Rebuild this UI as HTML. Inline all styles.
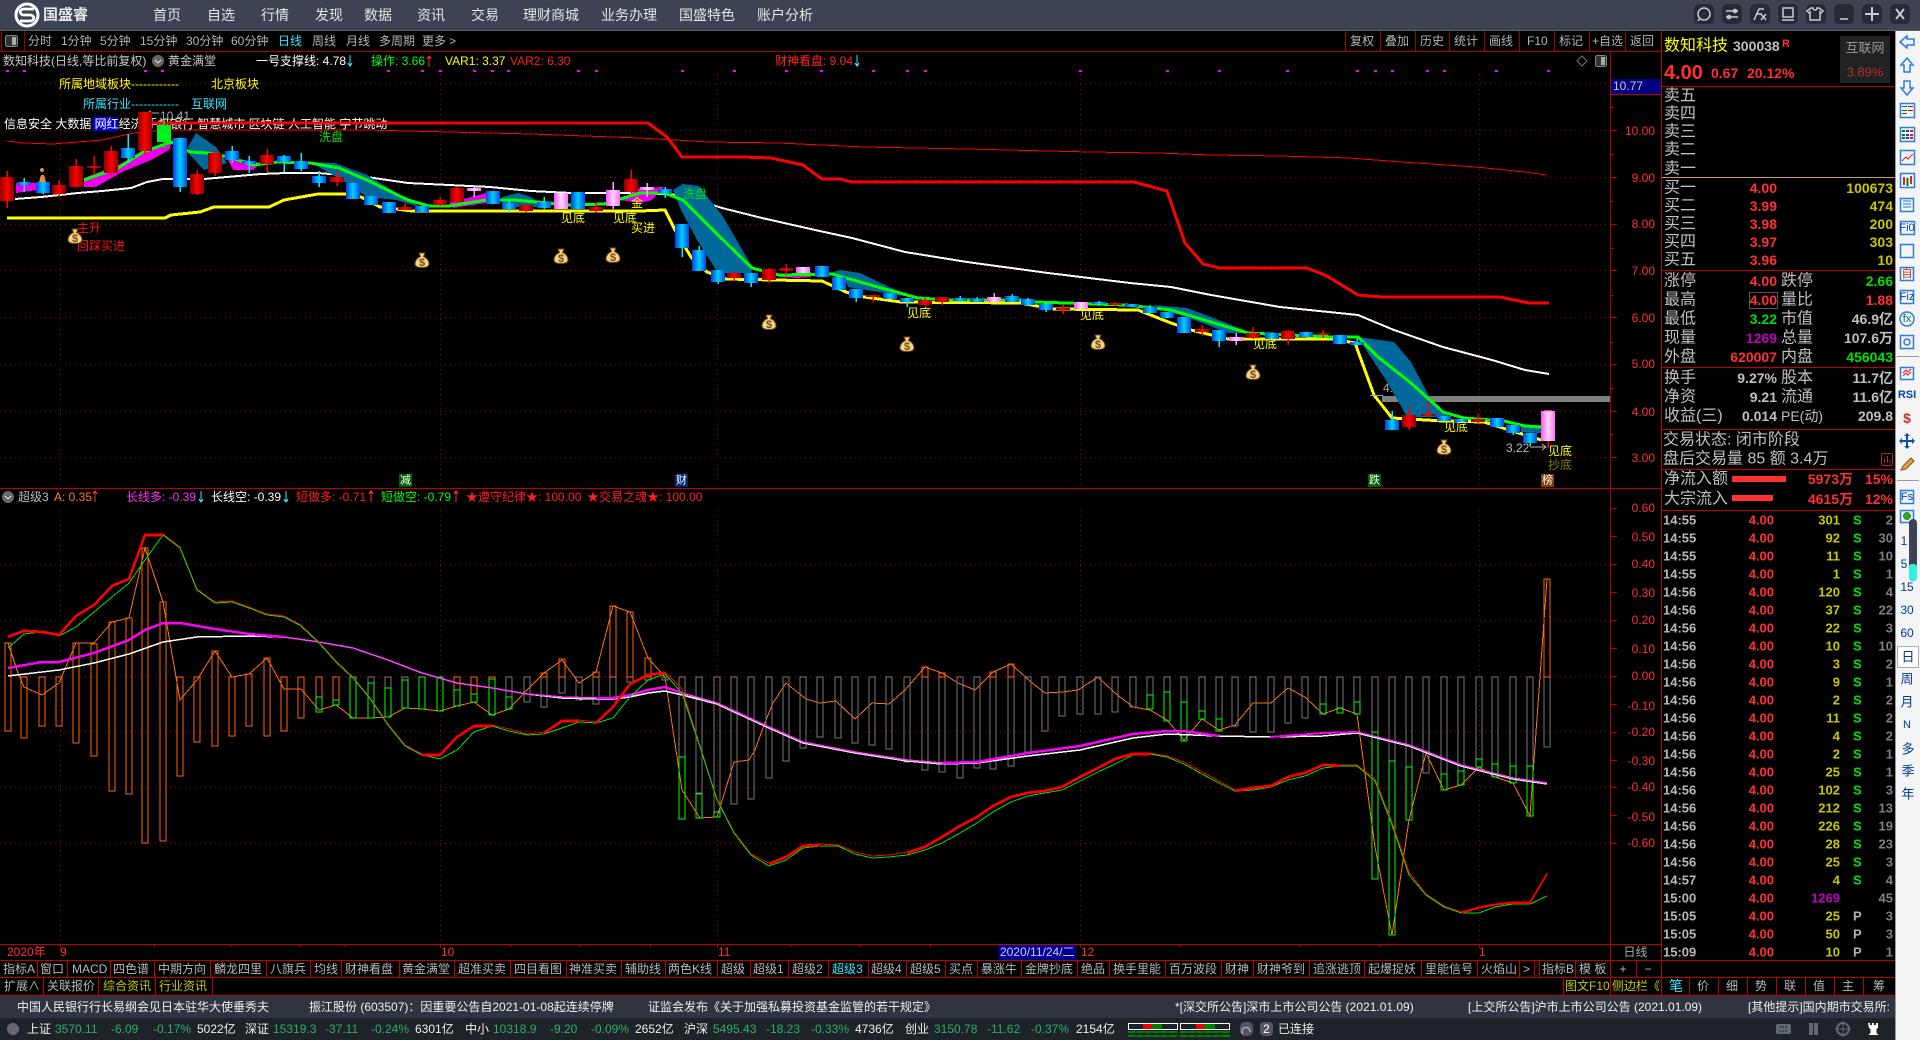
<!DOCTYPE html>
<html><head><meta charset="utf-8"><title>数知科技</title>
<style>
html,body{margin:0;padding:0;background:#000;overflow:hidden}
svg{display:block}
text{font-family:"Liberation Sans","WenQuanYi Zen Hei","Noto Sans CJK SC",sans-serif;font-size:12px;dominant-baseline:central;white-space:pre}
.s11{font-size:11px}.s13{font-size:13px}.s14{font-size:14px}.s16{font-size:16px}.b{font-weight:bold}
.e{text-anchor:end}.m{text-anchor:middle}
.n text{font-weight:bold}
.c rect{width:14px}
.h rect{width:6px;fill:none}
.dot{stroke:#a00000;stroke-dasharray:1 4;fill:none}
.ln{fill:none}
</style></head><body>
<svg xmlns="http://www.w3.org/2000/svg" width="1920" height="1040" viewBox="0 0 1920 1040" shape-rendering="crispEdges">
<defs>
<linearGradient id="gr" x1="0" x2="1" y1="0" y2="0"><stop offset="0" stop-color="#8c0000"/><stop offset=".5" stop-color="#ff0000"/><stop offset="1" stop-color="#8c0000"/></linearGradient>
<linearGradient id="gb" x1="0" x2="1" y1="0" y2="0"><stop offset="0" stop-color="#0040e8"/><stop offset=".5" stop-color="#00d0ff"/><stop offset="1" stop-color="#0048e8"/></linearGradient>
<linearGradient id="gp" x1="0" x2="1" y1="0" y2="0"><stop offset="0" stop-color="#ff50ff"/><stop offset=".5" stop-color="#ffd8ff"/><stop offset="1" stop-color="#ff70ff"/></linearGradient>
<g id="bag" shape-rendering="auto"><path d="M-3 -7 L3 -7 L1.5 -3.5 C5 -2 7 1 7 3.500 C7 6.500 4 7.500 0 7.500 C-4 7.500 -7 6.500 -7 3.500 C-7 1 -5 -2 -1.500 -3.500Z" fill="#f3d68c" stroke="#7a4a10" stroke-width="1"/></g>
</defs>
<rect width="1920" height="1040" fill="#000"/>

<!-- title bar -->
<rect width="1920" height="30" fill="#3e4353"/>
<rect y="30" width="1920" height="1" fill="#5a5f6d"/>
<g shape-rendering="auto"><circle cx="27" cy="15" r="11" fill="none" stroke="#fff" stroke-width="3"/><path d="M34 9H24C19 9 19 15 24 15H30C35 15 35 21 30 21H20" fill="none" stroke="#fff" stroke-width="2.800"/></g>
<text x="43" y="15" class="b" fill="#e8e8e8" style="font-size:15px">国盛睿</text>
<g class="s14" fill="#e6e6e6">
<text x="153" y="15" class="s14">首页</text><text x="207" y="15" class="s14">自选</text><text x="261" y="15" class="s14">行情</text><text x="315" y="15" class="s14">发现</text><text x="364" y="15" class="s14">数据</text><text x="417" y="15" class="s14">资讯</text><text x="471" y="15" class="s14">交易</text><text x="523" y="15" class="s14">理财商城</text><text x="601" y="15" class="s14">业务办理</text><text x="679" y="15" class="s14">国盛特色</text><text x="757" y="15" class="s14">账户分析</text>
</g>
<g fill="#272b36" shape-rendering="auto"><rect x="1694" y="4" width="20" height="20" rx="5"/><rect x="1722" y="4" width="20" height="20" rx="5"/><rect x="1750" y="4" width="20" height="20" rx="5"/><rect x="1778" y="4" width="20" height="20" rx="5"/><rect x="1806" y="4" width="20" height="20" rx="5"/><rect x="1834" y="4" width="20" height="20" rx="5"/><rect x="1862" y="4" width="20" height="20" rx="5"/><rect x="1890" y="4" width="20" height="20" rx="5"/></g>
<g fill="none" stroke="#c8ccd4" stroke-width="1.500" shape-rendering="auto">
<circle cx="1704" cy="14" r="6"/><path d="M1701 14h.01M1704 14h.01M1707 14h.01M1700 18l-2 3"/>
<path d="M1726 11h12M1726 17h12"/><circle cx="1735" cy="11" r="1.500"/><circle cx="1729" cy="17" r="1.500"/>
<path d="M1754 20L1759 9H1764M1756 14h6M1761 14l5 6M1766 14l-5 6"/>
<rect x="1783" y="8" width="10" height="9"/><path d="M1782 20h12"/>
<path d="M1812 8l-4 3 2 2 1-1v8h10v-8l1 1 2-2-4-3h-2a2 2 0 0 1-4 0z" transform="translate(-1 0)"/>
<path d="M1840 19h8"/>
<path d="M1872 7v14M1865 14h14" stroke-width="2"/>
<path d="M1896 9l8 10M1904 9l-8 10" stroke-width="2"/>
</g>

<!-- toolbar -->
<rect x="1" y="31" width="1" height="20" fill="#a00000"/><rect x="24" y="31" width="1" height="20" fill="#a00000"/>
<rect x="5.500" y="35.500" width="12" height="11" rx="2" fill="#333" stroke="#888"/><rect x="12" y="37" width="4" height="8" fill="#aaa"/>
<g fill="#b4b4b4">
<text x="28" y="41">分时</text><text x="61" y="41">1分钟</text><text x="100" y="41">5分钟</text><text x="140" y="41">15分钟</text><text x="186" y="41">30分钟</text><text x="231" y="41">60分钟</text><text x="278" y="41" fill="#30e8ff">日线</text><text x="312" y="41">周线</text><text x="346" y="41">月线</text><text x="379" y="41">多周期</text><text x="422" y="41">更多</text><text x="449" y="41">&gt;</text>
<text x="1350" y="41">复权</text><text x="1385" y="41">叠加</text><text x="1420" y="41">历史</text><text x="1454" y="41">统计</text><text x="1489" y="41">画线</text><text x="1527" y="41">F10</text><text x="1559" y="41">标记</text><text x="1592" y="41">+自选</text><text x="1630" y="41">返回</text>
</g>
<path d="M1345.500 31V51M1380.500 31V51M1415.500 31V51M1449.500 31V51M1484.500 31V51M1519.500 31V51M1554.500 31V51M1589.500 31V51M1625.500 31V51" stroke="#a00000"/>
<rect y="51" width="1661" height="1" fill="#b00000"/>

<!-- grid main -->
<path class="dot" d="M0 83.500H1610M0 130.500H1610M0 177.500H1610M0 224.500H1610M0 270.500H1610M0 317.500H1610M0 364.500H1610M0 411.500H1610M0 457.500H1610"/>
<path class="dot" d="M60.500 74V488M440.500 74V488M717.500 74V488M1080.500 74V488M1479.500 74V488M60.500 510V944M440.500 510V944M717.500 510V944M1080.500 510V944M1479.500 510V944"/>
<path class="dot" d="M0 564.500H1610M0 620.500H1610M0 676.500H1610M0 731.500H1610M0 787.500H1610M0 843.500H1610"/>

<!-- info row -->
<text x="3" y="61" fill="#c8c8c8">数知科技(日线,等比前复权)</text>
<circle cx="158" cy="61" r="6" fill="#666"/><path d="M155 60l3 3 3-3" stroke="#ddd" fill="none"/>
<text x="168" y="61" fill="#c8c8c8">黄金满堂</text>
<text x="256" y="61" fill="#fff">一号支撑线: 4.78</text><path d="M350 55v10M348 63l2 3 2-3" stroke="#30e8ff" fill="none"/>
<text x="371" y="61" fill="#00ff00">操作: 3.66</text><path d="M429 57v10M427 59l2-3 2 3" stroke="#ff3030" fill="none"/>
<text x="445" y="61" fill="#ffff00">VAR1: 3.37</text><text x="510" y="61" fill="#ff2020">VAR2: 6.30</text>
<text x="775" y="61" fill="#ff2020">财神看盘: 9.04</text><path d="M857 55v10M855 63l2 3 2-3" stroke="#30e8ff" fill="none"/>
<path d="M1582 56l5 5-5 5-5-5z" fill="none" stroke="#777" shape-rendering="auto"/><rect x="1595.500" y="55.500" width="11" height="11" rx="2" fill="#333" stroke="#888"/><rect x="1601" y="57" width="4" height="8" fill="#aaa"/>
<g fill="#ff00ff"><path d="M6 70h3v2h-3zM23 70h3v2h-3zM144 70h3v2h-3zM161 70h3v2h-3zM387 70h3v2h-3zM421 70h3v2h-3zM439 70h3v2h-3zM473 70h3v2h-3zM491 70h3v2h-3zM507 70h3v2h-3zM577 70h3v2h-3zM595 70h3v2h-3zM681 70h3v2h-3zM733 70h3v2h-3zM785 70h3v2h-3zM820 70h3v2h-3zM872 70h3v2h-3zM906 70h3v2h-3zM924 70h3v2h-3zM1079 70h3v2h-3zM1166 70h3v2h-3zM1218 70h3v2h-3zM1286 70h3v2h-3zM1356 70h3v2h-3zM1374 70h3v2h-3zM1391 70h3v2h-3zM1426 70h3v2h-3zM1443 70h3v2h-3zM1495 70h3v2h-3zM1547 70h3v2h-3z"/></g>

<!-- texts behind chart -->
<text x="59" y="84" fill="#ffff00">所属地域板块------------</text><text x="211" y="84" fill="#ffff00">北京板块</text>
<text x="83" y="104" fill="#30e8ff">所属行业------------</text><text x="191" y="104" fill="#30e8ff">互联网</text>
<rect x="93" y="117" width="25" height="14" fill="#0000d0"/>
<text x="4" y="124" fill="#fff">信息安全 大数据 网红经济 手机银行 智慧城市 区块链 人工智能 字节跳动</text>
<text x="160" y="116" fill="#aaa">10.41</text><path d="M147 113l4-2M147 113l4 2M147 113h12" stroke="#aaa" shape-rendering="auto" fill="none"/>
<text x="1383" y="388" fill="#aaa">4.18</text>

<!-- gray bar -->
<rect x="1382" y="396" width="228" height="6" fill="#808080"/>

<!-- red lines -->
<polyline class="ln" stroke="#ff0000" stroke-width="1" points="7,141 24,143 53,144 102,140 139,132 171,130 367,130 449,132 531,134 640,138 709,142 779,143 864,147 967,149 1089,152 1158,153 1211,155 1280,156 1349,158 1402,162 1476,167 1525,172 1547,175"/>
<polyline class="ln" stroke="#ff0000" stroke-width="3" points="151,123 648,123 667,137 682,157 742,157 771,158 803,165 822,179 840,179 852,182 1134,182 1167,191 1185,243 1203,264 1220,268 1307,268 1325,275 1358,295 1382,297 1500,297 1529,303 1549,303"/>
<polyline class="ln" stroke="#fff" stroke-width="2" points="15,199 41,197 78,193 102,191 131,188 147,182 163,179 204,179 261,174 286,173 318,173 367,177 408,183 490,187 531,191 571,193 640,193 681,195 722,208 762,218 815,230 852,238 905,252 967,262 1048,273 1130,283 1171,287 1211,295 1280,307 1358,315 1394,330 1443,347 1492,360 1525,370 1549,374"/>

<!-- teal -->
<g fill="#00699a">
<polygon points="188,147 196,133 216,147 227,163 204,170 190,155"/>
<polygon points="310,162 335,163 367,175 408,200 420,207 396,200 367,197 345,182"/>
<polygon points="502,197 518,193 531,197 547,207 502,207"/>
<polygon points="673,190 683,184 699,186 722,215 750,263 752,273 718,273 697,240 681,210"/>
<polygon points="830,273 840,270 860,273 889,287 918,298 885,293 848,287 844,277"/>
<polygon points="1154,305 1187,308 1211,317 1244,330 1252,333 1228,333 1187,317 1162,310"/>
<polygon points="1358,337 1394,342 1411,362 1431,400 1443,412 1451,417 1407,417 1386,380 1368,353"/>
<polygon points="1521,425 1541,425 1541,433 1521,432"/>
</g>
<!-- magenta -->
<g fill="#ee00ee">
<polygon points="84,178 118,165 143,152 173,140 169,150 151,160 122,172 96,187 84,187"/>
<polygon points="16,183 37,183 37,190 16,193"/>
<polygon points="227,158 245,160 261,163 253,170 233,170"/>
<polygon points="449,203 486,193 486,203 453,208"/>
<polygon points="620,200 640,188 664,187 652,200 640,203"/>
<polygon points="779,275 811,272 811,277 797,278 779,277"/>
</g>
<!-- yellow -->
<polyline class="ln" stroke="#ffff00" stroke-width="3" points="7,218 165,218 171,215 200,212 214,207 269,207 284,200 318,194 347,194 361,197 380,207 412,211 640,211 665,210 675,230 691,257 707,272 726,279 822,281 846,292 864,297 901,302 1020,303 1054,309 1138,310 1171,323 1191,330 1228,339 1333,339 1355,343 1374,395 1392,418 1443,421 1484,422 1541,440"/>
<!-- green -->
<polyline class="ln" stroke="#00ff00" stroke-width="3" points="84,180 118,168 143,152 171,142 190,152 208,153 229,157 253,165 278,162 310,163 339,168 367,180 408,200 429,206 449,206 486,200 514,200 571,205 604,204 640,193 664,193 683,200 718,235 752,268 779,275 832,274 885,289 918,298 950,300 1020,300 1036,302 1126,305 1171,310 1211,322 1248,333 1333,337 1358,337 1378,357 1411,383 1443,412 1464,418 1504,421 1525,426 1541,427"/>

<!-- wicks -->
<path fill="none" stroke="#ff0000" stroke-width="1.500" d="M7 171V208M59 180V197M76 159V187M94 156V175M111 146V175M145 112V155M197 170V195M215 150V176M267 149V172M337 171V186M405 203V210M440 197V206M457 187V203M526 205V212M596 202V213M631 170V193M734 272V281M769 268V283M786 264V275M873 295V302M925 298V306M942 297V305M1063 304V314M1115 302V306M1202 325V336M1253 327V339M1288 330V345M1323 330V338M1409 407V430M1428 402V417M1478 414V423M1548 441V448"/>
<path fill="none" stroke="#10e8ff" stroke-width="1.500" d="M24 178V192M43 177V194M128 134V163M180 138V192M232 146V163M249 156V173M284 155V172M301 153V171M319 171V187M509 200V213M544 197V209M665 187V198M682 224V257M699 246V271M718 270V284M751 273V287M856 289V302M907 298V307M960 296V302M977 297V302M1012 294V302M1028 298V306M1046 302V312M1099 301V306M1150 305V314M1219 330V347M1357 338V346M1392 411V430M1513 425V435M1530 433V446"/>
<path fill="none" stroke="#ffa0ff" stroke-width="1.500" d="M474 185V197M613 182V209M647 183V197M1236 333V345M994 293V302"/>
<path d="M164 120V148" stroke="#00e000" stroke-width="1.500"/>
<!-- candles -->
<g class="c" fill="url(#gr)">
<rect x="0" y="177" height="24"/><rect x="52" y="185" height="9"/><rect x="69" y="166" height="21"/><rect x="87" y="166" height="2"/><rect x="104" y="151" height="22"/><rect x="138" y="112" height="39"/><rect x="190" y="174" height="20"/><rect x="208" y="153" height="20"/><rect x="260" y="155" height="9"/><rect x="330" y="177" height="5"/><rect x="398" y="207" height="3"/><rect x="433" y="200" height="5"/><rect x="450" y="188" height="14"/><rect x="519" y="205" height="6"/><rect x="589" y="207" height="4"/><rect x="624" y="179" height="13"/><rect x="727" y="273" height="5"/><rect x="762" y="269" height="11"/><rect x="779" y="268" height="3"/><rect x="866" y="295" height="2"/><rect x="918" y="300" height="5"/><rect x="935" y="297" height="5"/><rect x="1056" y="308" height="2"/><rect x="1108" y="303" height="2"/><rect x="1195" y="329" height="3"/><rect x="1246" y="333" height="5"/><rect x="1281" y="331" height="8"/><rect x="1316" y="333" height="2"/><rect x="1402" y="415" height="12"/><rect x="1421" y="414" height="2"/><rect x="1471" y="419" height="3"/>
</g>
<g class="c" fill="url(#gb)">
<rect x="17" y="182" height="3"/><rect x="36" y="182" height="11"/><rect x="121" y="148" height="10"/><rect x="173" y="138" height="49"/><rect x="225" y="151" height="9"/><rect x="242" y="161" height="3"/><rect x="277" y="156" height="6"/><rect x="294" y="161" height="8"/><rect x="312" y="176" height="7"/><rect x="346" y="183" height="16"/><rect x="364" y="196" height="9"/><rect x="382" y="202" height="11"/><rect x="415" y="206" height="6"/><rect x="486" y="191" height="13"/><rect x="502" y="203" height="6"/><rect x="537" y="202" height="6"/><rect x="571" y="192" height="17"/><rect x="658" y="189" height="4"/><rect x="675" y="224" height="24"/><rect x="692" y="250" height="21"/><rect x="711" y="270" height="12"/><rect x="744" y="273" height="10"/><rect x="815" y="266" height="11"/><rect x="832" y="277" height="13"/><rect x="849" y="289" height="9"/><rect x="883" y="293" height="6"/><rect x="900" y="298" height="4"/><rect x="953" y="298" height="3"/><rect x="970" y="299" height="3"/><rect x="1005" y="296" height="6"/><rect x="1021" y="299" height="6"/><rect x="1039" y="304" height="6"/><rect x="1092" y="302" height="2"/><rect x="1125" y="304" height="3"/><rect x="1143" y="307" height="6"/><rect x="1160" y="312" height="6"/><rect x="1177" y="317" height="16"/><rect x="1212" y="330" height="11"/><rect x="1265" y="333" height="6"/><rect x="1299" y="332" height="5"/><rect x="1333" y="335" height="9"/><rect x="1350" y="342" height="3"/><rect x="1385" y="420" height="10"/><rect x="1437" y="416" height="5"/><rect x="1454" y="419" height="4"/><rect x="1490" y="418" height="9"/><rect x="1506" y="425" height="8"/><rect x="1523" y="433" height="10"/>
</g>
<g class="c" fill="url(#gp)">
<rect x="467" y="188" height="3"/><rect x="554" y="193" height="16"/><rect x="606" y="190" height="16"/><rect x="640" y="187" height="3"/><rect x="796" y="267" height="6"/><rect x="987" y="297" height="5"/><rect x="1074" y="302" height="7"/><rect x="1229" y="337" height="4"/><rect x="1541" y="411" height="30"/>
</g>
<rect x="157" y="125" width="14" height="17" fill="#00f020"/>
<rect x="1370" y="395" width="13" height="1" fill="#7f9fdf"/>
<rect x="1544" y="410" width="8" height="1" fill="#ff3030"/>

<!-- chart labels -->
<g fill="#ffff00">
<text x="561" y="218">见底</text><text x="613" y="218">见底</text><text x="631" y="203">金</text><text x="631" y="228">买进</text><text x="907" y="313">见底</text><text x="1080" y="315">见底</text><text x="1253" y="344">见底</text><text x="1444" y="427">见底</text><text x="1548" y="451">见底</text></g>
<text x="1548" y="465" fill="#808000">抄底</text>
<text x="319" y="137" fill="#00e000">洗盘</text><text x="683" y="194" fill="#00e000">洗盘</text>
<text x="77" y="228" fill="#ff1010">主升</text><text x="77" y="246" fill="#ff1010">回踩买进</text>
<text x="1506" y="448" fill="#bbb">3.22</text><path d="M1530 447h16M1542 444l4 3-4 3" stroke="#bbb" fill="none" shape-rendering="auto"/>
<path d="M42 172a2 2 0 1 1 .01 0M39 182l2-7h3l2 7z" fill="#e09030"/>
<g>
<use href="#bag" x="75" y="236"/><text x="75" y="239" class="m s11 b" fill="#7a4a10">$</text>
<use href="#bag" x="422" y="260"/><text x="422" y="263" class="m s11 b" fill="#7a4a10">$</text>
<use href="#bag" x="561" y="256"/><text x="561" y="259" class="m s11 b" fill="#7a4a10">$</text>
<use href="#bag" x="613" y="255"/><text x="613" y="258" class="m s11 b" fill="#7a4a10">$</text>
<use href="#bag" x="769" y="322"/><text x="769" y="325" class="m s11 b" fill="#7a4a10">$</text>
<use href="#bag" x="907" y="344"/><text x="907" y="347" class="m s11 b" fill="#7a4a10">$</text>
<use href="#bag" x="1098" y="342"/><text x="1098" y="345" class="m s11 b" fill="#7a4a10">$</text>
<use href="#bag" x="1253" y="372"/><text x="1253" y="375" class="m s11 b" fill="#7a4a10">$</text>
<use href="#bag" x="1444" y="447"/><text x="1444" y="450" class="m s11 b" fill="#7a4a10">$</text>
</g>
<rect x="399" y="474" width="13" height="13" fill="#006000"/><text x="405.500" y="480.500" class="m s11" fill="#fff">减</text>
<rect x="675" y="474" width="13" height="13" fill="#002a70"/><text x="681.500" y="480.500" class="m s11" fill="#fff">财</text>
<rect x="1368" y="474" width="13" height="13" fill="#006000"/><text x="1374.500" y="480.500" class="m s11" fill="#fff">跌</text>
<rect x="1541" y="474" width="13" height="13" fill="#804000"/><text x="1547.500" y="480.500" class="m s11" fill="#fff">榜</text>

<!-- dividers -->
<rect y="488" width="1661" height="1" fill="#c00000"/>
<rect x="1610" y="51" width="1" height="909" fill="#a80000"/>

<!-- sub header -->
<circle cx="8" cy="497" r="6" fill="#666"/><path d="M5 496l3 3 3-3" stroke="#ddd" fill="none"/>
<text x="18" y="497" fill="#bbb">超级3</text><text x="54" y="497" fill="#ff7f20">A: 0.35</text><path d="M95 492v10M93 494l2-3 2 3" stroke="#ff3030" fill="none"/>
<text x="126" y="497" fill="#ff30ff">长线多: -0.39</text><path d="M201 491v10M199 499l2 3 2-3" stroke="#30e8ff" fill="none"/>
<text x="211" y="497" fill="#fff">长线空: -0.39</text><path d="M286 491v10M284 499l2 3 2-3" stroke="#30e8ff" fill="none"/>
<text x="296" y="497" fill="#ff2020">短做多: -0.71</text><path d="M371 492v10M369 494l2-3 2 3" stroke="#ff3030" fill="none"/>
<text x="381" y="497" fill="#00ff00">短做空: -0.79</text><path d="M456 492v10M454 494l2-3 2 3" stroke="#ff3030" fill="none"/>
<text x="466" y="497" fill="#ff2020">★遵守纪律★: 100.00</text><text x="587" y="497" fill="#ff2020">★交易之魂★: 100.00</text>

<!-- thin orange line -->
<polyline class="ln" stroke="#ff7010" points="8,643 18,673 24,687 42,695 59,683 76,643 94,643 112,622 129,618 145,548 163,602 180,700 197,680 215,651 232,677 249,674 267,658 284,689 301,689 319,710 336,705 353,718 371,718 388,717 405,708 422,709 440,711 457,706 474,702 492,715 509,709 527,690 544,673 562,660 579,683 596,672 613,606 630,612 648,658 665,677 682,790 700,818 717,817 734,762 749,760 755,750 766,720 773,703 786,683 806,699 820,703 836,701 855,719 872,703 889,704 905,690 925,667 942,673 958,683 975,690 993,672 1011,664 1031,682 1045,693 1062,692 1078,690 1098,677 1115,693 1133,707 1150,710 1167,720 1184,740 1202,719 1219,730 1235,725 1253,703 1271,703 1288,688 1305,697 1323,714 1340,708 1357,714 1375,847 1392,935 1409,820 1426,753 1444,790 1461,785 1479,767 1495,777 1513,783 1530,816 1547,579"/>

<!-- histogram -->
<g class="h" stroke="#777">
<rect x="368" y="677" height="6"/><rect x="385" y="677" height="11"/><rect x="402" y="677" height="3"/><rect x="506" y="677" height="20"/><rect x="524" y="677" height="25"/><rect x="541" y="677" height="30"/><rect x="559" y="677" height="16"/><rect x="576" y="677" height="23"/><rect x="593" y="677" height="27"/><rect x="610" y="677" height="21"/><rect x="627" y="677" height="5"/><rect x="645" y="677" height="3"/><rect x="662" y="677" height="3"/><rect x="679" y="677" height="80"/><rect x="696" y="677" height="116"/><rect x="714" y="677" height="135"/><rect x="731" y="677" height="127"/><rect x="748" y="677" height="122"/><rect x="766" y="677" height="101"/><rect x="783" y="677" height="84"/><rect x="800" y="677" height="71"/><rect x="817" y="677" height="60"/><rect x="835" y="677" height="61"/><rect x="852" y="677" height="66"/><rect x="869" y="677" height="68"/><rect x="886" y="677" height="72"/><rect x="904" y="677" height="85"/><rect x="922" y="677" height="93"/><rect x="939" y="677" height="95"/><rect x="957" y="677" height="101"/><rect x="974" y="677" height="91"/><rect x="990" y="677" height="92"/><rect x="1008" y="677" height="89"/><rect x="1025" y="677" height="75"/><rect x="1042" y="677" height="54"/><rect x="1059" y="677" height="39"/><rect x="1077" y="677" height="37"/><rect x="1095" y="677" height="37"/><rect x="1112" y="677" height="35"/><rect x="1130" y="677" height="30"/><rect x="1147" y="677" height="18"/><rect x="1164" y="677" height="15"/><rect x="1181" y="677" height="25"/><rect x="1199" y="677" height="34"/><rect x="1216" y="677" height="42"/><rect x="1232" y="677" height="49"/><rect x="1250" y="677" height="55"/><rect x="1268" y="677" height="55"/><rect x="1285" y="677" height="46"/><rect x="1302" y="677" height="41"/><rect x="1320" y="677" height="27"/><rect x="1337" y="677" height="31"/><rect x="1354" y="677" height="25"/><rect x="1372" y="677" height="55"/><rect x="1389" y="677" height="84"/><rect x="1406" y="677" height="90"/><rect x="1423" y="677" height="96"/><rect x="1441" y="677" height="97"/><rect x="1458" y="677" height="94"/><rect x="1476" y="677" height="82"/><rect x="1492" y="677" height="87"/><rect x="1510" y="677" height="89"/><rect x="1527" y="677" height="89"/><rect x="1544" y="677" height="70"/>
</g>
<g class="h" stroke="#ff6600">
<rect x="5" y="643" height="88"/><rect x="21" y="677" height="61"/><rect x="39" y="677" height="49"/><rect x="56" y="677" height="49"/><rect x="73" y="643" height="100"/><rect x="91" y="644" height="112"/><rect x="109" y="622" height="169"/><rect x="126" y="618" height="176"/><rect x="142" y="548" height="295"/><rect x="160" y="602" height="239"/><rect x="177" y="677" height="99"/><rect x="194" y="677" height="65"/><rect x="212" y="651" height="95"/><rect x="229" y="677" height="59"/><rect x="246" y="674" height="52"/><rect x="264" y="658" height="78"/><rect x="281" y="677" height="54"/><rect x="298" y="677" height="41"/><rect x="316" y="677" height="20"/><rect x="333" y="677" height="23"/><rect x="454" y="677" height="13"/><rect x="471" y="677" height="17"/><rect x="489" y="677" height="2"/><rect x="541" y="673" height="4"/><rect x="559" y="659" height="18"/><rect x="593" y="672" height="5"/><rect x="610" y="606" height="71"/><rect x="627" y="612" height="65"/><rect x="645" y="658" height="19"/><rect x="922" y="667" height="10"/><rect x="939" y="673" height="4"/><rect x="990" y="672" height="5"/><rect x="1008" y="664" height="13"/><rect x="1544" y="579" height="98"/>
</g>
<g class="h" stroke="#00ff00">
<rect x="316" y="697" height="15"/><rect x="333" y="700" height="5"/><rect x="350" y="677" height="41"/><rect x="368" y="683" height="35"/><rect x="385" y="688" height="29"/><rect x="402" y="680" height="28"/><rect x="419" y="677" height="32"/><rect x="437" y="677" height="34"/><rect x="454" y="690" height="16"/><rect x="471" y="694" height="8"/><rect x="489" y="679" height="36"/><rect x="506" y="697" height="12"/><rect x="679" y="757" height="62"/><rect x="696" y="794" height="24"/><rect x="714" y="812" height="5"/><rect x="1147" y="695" height="14"/><rect x="1164" y="692" height="29"/><rect x="1181" y="702" height="39"/><rect x="1199" y="711" height="8"/><rect x="1216" y="719" height="12"/><rect x="1320" y="704" height="10"/><rect x="1337" y="708" height="5"/><rect x="1354" y="702" height="12"/><rect x="1372" y="732" height="147"/><rect x="1389" y="761" height="174"/><rect x="1406" y="767" height="53"/><rect x="1441" y="774" height="16"/><rect x="1458" y="771" height="14"/><rect x="1476" y="759" height="8"/><rect x="1492" y="764" height="13"/><rect x="1510" y="766" height="17"/><rect x="1527" y="766" height="50"/>
</g>

<!-- sub lines -->
<polyline class="ln" stroke="#fff" stroke-width="1.500" points="8,676 59,670 94,663 129,654 163,642 197,637 249,636 284,637 319,642 353,648 388,660 422,673 457,683 492,688 527,694 562,698 596,699 613,699 630,697 648,693 665,691 682,695 717,704 769,728 803,743 855,753 907,761 942,764 977,763 1028,756 1080,750 1133,738 1167,734 1219,736 1270,737 1323,736 1357,733 1409,746 1461,766 1513,779 1547,784"/>
<polyline class="ln" stroke="#ff00ff" stroke-width="2.500" points="8,668 42,662 59,662 94,653 129,640 145,630 163,623 180,623 215,629 249,634 284,637"/>
<polyline class="ln" stroke="#ff40ff" stroke-width="1.500" points="284,637 319,642 353,648 388,660 422,673 457,683 492,688 527,694 562,697 596,698"/>
<polyline class="ln" stroke="#ff00ff" stroke-width="2.500" points="596,698 613,698 630,695 648,690 665,687 682,693"/>
<polyline class="ln" stroke="#ff40ff" stroke-width="1.500" points="682,693 717,703 769,727 803,742 855,752 907,760 942,763"/>
<polyline class="ln" stroke="#ff00ff" stroke-width="2.500" points="942,763 977,762 1028,753 1080,746 1133,734 1167,731 1184,731 1219,736"/>
<polyline class="ln" stroke="#ff00ff" stroke-width="2" points="1270,737 1323,733 1357,732"/>
<polyline class="ln" stroke="#ff40ff" stroke-width="1.500" points="1357,732 1409,745 1461,765 1513,778 1547,783"/>
<!-- short-term red under green -->
<polyline class="ln" stroke="#ff0000" transform="translate(0 -1)" points="8,637 24,631 42,632 59,635 76,616 94,605 112,586 129,579 145,535 163,535 180,548 197,590 215,603 232,602 249,608 267,615 284,617 301,626 319,643 336,662 353,678 371,700 388,725 405,746 422,755 440,755 457,737 474,726 492,726 509,730 527,735 544,733 562,721 579,721 596,723 613,707 630,684 648,675 665,673 682,690 700,747 717,800 734,833 751,855 769,864 786,857 803,846 820,845 838,846 855,853 872,857 889,856 907,853 925,847 942,837 960,826 977,817 993,806 1011,797 1028,793 1045,791 1062,787 1080,777 1098,768 1115,759 1133,754 1150,754 1167,757 1184,763 1202,773 1219,782 1235,791 1253,788 1271,786 1288,777 1305,773 1323,765 1340,766 1357,766 1375,780 1392,823 1409,873 1426,895 1444,907 1461,913 1479,908 1495,905 1513,903 1530,903 1547,874"/>
<polyline class="ln" stroke="#00e000" points="8,648 24,634 42,632 59,636 76,627 94,612 112,597 129,583 145,560 163,535 180,548 197,590 215,603 232,602 249,608 267,615 284,617 301,626 319,643 336,662 353,678 371,700 388,725 405,746 422,755 440,759 457,750 474,732 492,726 509,731 527,735 544,734 562,728 579,722 596,723 613,718 630,697 648,680 665,674 682,693 700,747 717,800 734,833 751,855 769,866 786,860 803,848 820,846 838,846 855,854 872,858 889,857 907,855 925,850 942,843 960,833 977,823 993,812 1011,802 1028,796 1045,793 1062,790 1080,781 1098,772 1115,764 1133,755 1150,754 1167,757 1184,764 1202,774 1219,783 1235,791 1253,790 1271,787 1288,780 1305,776 1323,768 1340,766 1357,766 1375,781 1392,825 1409,875 1426,895 1444,907 1461,913 1479,913 1495,907 1513,904 1530,904 1547,896"/>
<polyline class="ln" stroke="#ff0000" stroke-width="2.500" points="8,637 24,631 42,632 59,635 76,616 94,605 112,586 129,579 145,535 163,535"/>
<polyline class="ln" stroke="#ff0000" stroke-width="2.500" points="422,755 440,755 457,737 474,726 492,726"/>
<polyline class="ln" stroke="#ff0000" stroke-width="2.500" points="544,733 562,721 579,721"/>
<polyline class="ln" stroke="#ff0000" stroke-width="2.500" points="596,723 613,707 630,684 648,675 665,673"/>
<polyline class="ln" stroke="#ff0000" stroke-width="2.500" points="769,864 786,857 803,846 820,845"/>
<polyline class="ln" stroke="#ff0000" stroke-width="2.500" points="907,853 925,847 942,837 960,826 977,817 993,806 1011,797 1028,793 1045,791 1062,787 1080,777 1098,768 1115,759 1133,754 1150,754"/>
<polyline class="ln" stroke="#ff0000" stroke-width="2.500" points="1235,791 1253,788 1271,786 1288,777 1305,773 1323,765 1340,766"/>
<polyline class="ln" stroke="#ff0000" stroke-width="1.500" points="1461,913 1479,908 1495,905 1513,903 1530,903 1547,874"/>

<!-- axis -->
<path d="M1611 107.500h3M1611 154.500h3M1611 201.500h3M1611 248.500h3M1611 295.500h3M1611 342.500h3M1611 388.500h3M1611 434.500h3M1611 130.500h6M1611 177.500h6M1611 224.500h6M1611 270.500h6M1611 317.500h6M1611 364.500h6M1611 411.500h6M1611 457.500h6M1611 508.500h6M1611 536.500h6M1611 564.500h6M1611 592.500h6M1611 620.500h6M1611 648.500h6M1611 676.500h6M1611 704.500h6M1611 732.500h6M1611 760.500h6M1611 787.500h6M1611 815.500h6M1611 843.500h6" stroke="#c00000"/>
<rect x="1611" y="79" width="50" height="15" fill="#000080"/><rect x="1611" y="94" width="50" height="1" fill="#c00000"/>
<text x="1613" y="86" fill="#c8c8c8">10.77</text>
<g class="e" fill="#ff3030">
<text class="e" x="1655" y="131">10.00</text><text class="e" x="1655" y="178">9.00</text><text class="e" x="1655" y="224">8.00</text><text class="e" x="1655" y="271">7.00</text><text class="e" x="1655" y="318">6.00</text><text class="e" x="1655" y="364">5.00</text><text class="e" x="1655" y="412">4.00</text><text class="e" x="1655" y="458">3.00</text>
<text class="e" x="1655" y="508">0.60</text><text class="e" x="1655" y="537">0.50</text><text class="e" x="1655" y="564">0.40</text><text class="e" x="1655" y="593">0.30</text><text class="e" x="1655" y="620">0.20</text><text class="e" x="1655" y="649">0.10</text><text class="e" x="1655" y="676">0.00</text><text class="e" x="1655" y="706">-0.10</text><text class="e" x="1655" y="732">-0.20</text><text class="e" x="1655" y="761">-0.30</text><text class="e" x="1655" y="787">-0.40</text><text class="e" x="1655" y="817">-0.50</text><text class="e" x="1655" y="843">-0.60</text>
</g>

<!-- date row -->
<rect y="944" width="1661" height="1" fill="#c00000"/><rect y="960" width="1895" height="1" fill="#c00000"/>
<path d="M60.500 945v2M154.500 945v2M230.500 945v2M300.500 945v2M345.500 945v2M440.500 945v3M510.500 945v2M580.500 945v2M650.500 945v2M717.500 945v3M790.500 945v2M860.500 945v2M930.500 945v2M1080.500 945v3M1180.500 945v2M1300.500 945v2M1379.500 945v2M1479.500 945v3" stroke="#c00000"/>
<text x="7" y="952" fill="#ff3030">2020年</text><text x="60" y="952" fill="#ff3030">9</text><text x="441" y="952" fill="#ff3030">10</text><text x="718" y="952" fill="#ff3030">11</text>
<rect x="998" y="945" width="78" height="15" fill="#000090"/><text x="1000" y="952" fill="#c8c8ff">2020/11/24/二</text>
<text x="1081" y="952" fill="#ff3030">12</text><text x="1479" y="952" fill="#ff3030">1</text>
<text x="1635.500" y="952" class="m" fill="#aaa">日线</text>

<!-- tabs -->
<rect y="977" width="1895" height="1" fill="#c00000"/><rect y="995" width="1895" height="1" fill="#c00000"/>
<path d="M37.500 961v16M67.500 961v16M110.500 961v16M154.500 961v16M210.500 961v16M266.500 961v16M310.500 961v16M341.500 961v16M399.500 961v16M454.500 961v16M510.500 961v16M566.500 961v16M621.500 961v16M665.500 961v16M717.500 961v16M750.500 961v16M788.500 961v16M828.500 961v16M868.500 961v16M906.500 961v16M945.500 961v16M977.500 961v16M1021.500 961v16M1077.500 961v16M1109.500 961v16M1165.500 961v16M1221.500 961v16M1253.500 961v16M1309.500 961v16M1364.500 961v16M1421.500 961v16M1477.500 961v16M1519.500 961v16M1534.500 961v16M1539.500 961v16M1575.500 961v16M1610.500 961v34M1636.500 961v16M1661.500 961v34M43.500 978v17M98.500 978v17M155.500 978v17M212.500 978v17M1563.500 978v17M1689.500 978v17M1718.500 978v17M1747.500 978v17M1776.500 978v17M1805.500 978v17M1834.500 978v17M1863.500 978v17" stroke="#c00000"/>
<g fill="#b8b8b8">
<text x="3" y="969">指标A</text><text x="40" y="969">窗口</text><text x="72" y="969">MACD</text><text x="113" y="969">四色谱</text><text x="158" y="969">中期方向</text><text x="214" y="969">麟龙四里</text><text x="270" y="969">八旗兵</text><text x="314" y="969">均线</text><text x="345" y="969">财神看盘</text><text x="402" y="969">黄金满堂</text><text x="458" y="969">超准买卖</text><text x="514" y="969">四目看图</text><text x="569" y="969">神准买卖</text><text x="625" y="969">辅助线</text><text x="668" y="969">两色K线</text><text x="721" y="969">超级</text><text x="753" y="969">超级1</text><text x="792" y="969">超级2</text><text x="832" y="969" fill="#30e8ff">超级3</text><text x="871" y="969">超级4</text><text x="910" y="969">超级5</text><text x="949" y="969">买点</text><text x="981" y="969">暴涨牛</text><text x="1025" y="969">金牌抄底</text><text x="1081" y="969">绝品</text><text x="1113" y="969">换手里能</text><text x="1169" y="969">百万波段</text><text x="1225" y="969">财神</text><text x="1257" y="969">财神爷到</text><text x="1313" y="969">追涨逃顶</text><text x="1368" y="969">起爆捉妖</text><text x="1425" y="969">里能信号</text><text x="1481" y="969">火焰山</text><text x="1523" y="969">&gt;</text><text x="1542" y="969">指标B</text><text x="1579" y="969">模 板</text><text x="1623" y="969" class="m">+</text><text x="1648" y="969" class="m">−</text>
<text x="4" y="986">扩展∧</text><text x="47" y="986">关联报价</text>
<text x="103" y="986" fill="#c8c800">综合资讯</text><text x="159" y="986" fill="#c8c800">行业资讯</text>
<text x="1565" y="986" fill="#c8c800">图文F10</text><text x="1612" y="986" fill="#c8c800">侧边栏《</text>
</g>
<g class="m" fill="#b8b8b8" >
<text class="m s14" x="1676" y="986" fill="#30e8ff">笔</text><text class="m" x="1703" y="986">价</text><text class="m" x="1732" y="986">细</text><text class="m" x="1761" y="986">势</text><text class="m" x="1790" y="986">联</text><text class="m" x="1819" y="986">值</text><text class="m" x="1848" y="986">主</text><text class="m" x="1879" y="986">筹</text>
</g>

<!-- ticker -->
<rect y="996" width="1895" height="22" fill="#2f3440"/>
<g fill="#f0f0f0">
<text x="17" y="1007">中国人民银行行长易纲会见日本驻华大使垂秀夫</text>
<text x="309" y="1007">振江股份 (603507)：因重要公告自2021-01-08起连续停牌</text>
<text x="648" y="1007">证监会发布《关于加强私募投资基金监管的若干规定》</text>
<text x="1175" y="1007">*[深交所公告]深市上市公司公告 (2021.01.09)</text>
<text x="1468" y="1007">[上交所公告]沪市上市公司公告 (2021.01.09)</text>
<text x="1748" y="1007">[其他提示]国内期市交易所:</text>
</g>
<!-- status -->
<rect y="1018" width="1895" height="22" fill="#1e2329"/>
<circle cx="13" cy="1029" r="6" fill="#667"/>
<g fill="#f0f0f0"><text x="27" y="1029">上证</text><text x="197" y="1029">5022亿</text><text x="245" y="1029">深证</text><text x="415" y="1029">6301亿</text><text x="465" y="1029">中小</text><text x="635" y="1029">2652亿</text><text x="684" y="1029">沪深</text><text x="855" y="1029">4736亿</text><text x="905" y="1029">创业</text><text x="1076" y="1029">2154亿</text></g>
<g fill="#2eb060"><text x="55" y="1029">3570.11</text><text x="111" y="1029">-6.09</text><text x="153" y="1029">-0.17%</text><text x="273" y="1029">15319.3</text><text x="325" y="1029">-37.11</text><text x="371" y="1029">-0.24%</text><text x="493" y="1029">10318.9</text><text x="550" y="1029">-9.20</text><text x="591" y="1029">-0.09%</text><text x="713" y="1029">5495.43</text><text x="766" y="1029">-18.23</text><text x="811" y="1029">-0.33%</text><text x="934" y="1029">3150.78</text><text x="987" y="1029">-11.62</text><text x="1031" y="1029">-0.37%</text></g>
<g fill="none" stroke="#fff"><rect x="1128.500" y="1023.500" width="49" height="6"/><rect x="1180.500" y="1023.500" width="49" height="6"/></g>
<path d="M1143 1024h9v5h-9zM1196 1024h8v5h-8z" fill="#f00000"/><path d="M1152 1024h10v5h-10zM1204 1024h11v5h-11z" fill="#008000"/>
<path d="M1128 1031h49v2h-49zM1128 1035h49v2h-49zM1180 1031h50v2h-50zM1180 1035h50v2h-50z" fill="#008000"/>
<path d="M1136 1030v8M1144 1030v8M1152 1030v8M1160 1030v8M1168 1030v8M1188 1030v8M1196 1030v8M1204 1030v8M1212 1030v8M1220 1030v8" stroke="#1e2329"/>
<rect x="1240" y="1022" width="13" height="14" rx="5" fill="#556" shape-rendering="auto"/><path d="M1243 1034a4 4 0 1 1 7-2" stroke="#ccd" fill="none" shape-rendering="auto"/>
<rect x="1260" y="1022" width="13" height="14" rx="4" fill="#556" shape-rendering="auto"/><text x="1266.500" y="1029" class="m" fill="#fff">2</text>
<text x="1278" y="1029" fill="#f0f0f0">已连接</text>
<g shape-rendering="auto"><rect x="1776" y="1024" width="15" height="10" rx="2" fill="#667"/><path d="M1779 1027h9M1779 1031h9" stroke="#1e2329" stroke-dasharray="2 1"/>
<path d="M1811 1023v12M1816 1023v12" stroke="#667" stroke-width="4"/>
<circle cx="1843" cy="1029" r="6" fill="none" stroke="#667" stroke-width="2"/><path d="M1843 1021v16M1835 1029h16" stroke="#667"/>
<path d="M1868 1023h2v2h2v-2h2v2h2v-2h2v5l-1.500 1v4l2 2h-10l2-2v-4l-1.500-1z" fill="#fff"/></g>

<!-- right panel -->
<rect x="1661" y="31" width="1" height="965" fill="#b80000"/>
<text x="1664" y="46" class="s16" fill="#ffff00">数知科技</text><text x="1733" y="46" class="s14 b" fill="#c0c0c0">300038</text><text x="1782" y="44" class="s11 b" fill="#ff3030">R</text>
<text x="1664" y="73" class="b" style="font-size:20px" fill="#ff3030">4.00</text><text x="1711" y="73" class="s14 b" fill="#ff3030">0.67</text><text x="1747" y="73" class="s14 b" fill="#ff3030">20.12%</text>
<rect x="1840" y="36" width="50" height="47" fill="#222"/><text x="1865" y="48" class="m s13" fill="#999">互联网</text><text x="1865" y="72" class="m s13" fill="#b03030">3.89%</text>
<rect x="1662" y="86" width="233" height="1" fill="#c00000"/>
<g class="s16" fill="#c0c0c0">
<text class="s16" x="1664" y="96">卖五</text><text class="s16" x="1664" y="114">卖四</text><text class="s16" x="1664" y="132">卖三</text><text class="s16" x="1664" y="150">卖二</text><text class="s16" x="1664" y="169">卖一</text>
<text class="s16" x="1664" y="188">买一</text><text class="s16" x="1664" y="206">买二</text><text class="s16" x="1664" y="224">买三</text><text class="s16" x="1664" y="242">买四</text><text class="s16" x="1664" y="260">买五</text>
<text class="s16" x="1664" y="281">涨停</text><text class="s16" x="1664" y="300">最高</text><text class="s16" x="1664" y="319">最低</text><text class="s16" x="1664" y="338">现量</text><text class="s16" x="1664" y="357">外盘</text>
<text class="s16" x="1781" y="281">跌停</text><text class="s16" x="1781" y="300">量比</text><text class="s16" x="1781" y="319">市值</text><text class="s16" x="1781" y="338">总量</text><text class="s16" x="1781" y="357">内盘</text>
<text class="s16" x="1664" y="378">换手</text><text class="s16" x="1664" y="397">净资</text><text class="s16" x="1664" y="416">收益(三)</text>
<text class="s16" x="1781" y="378">股本</text><text class="s16" x="1781" y="397">流通</text><text class="s14" x="1781" y="416">PE(动)</text>
<text class="s16" x="1663" y="440">交易状态: 闭市阶段</text><text class="s16" x="1663" y="459">盘后交易量 85 额 3.4万</text>
<text class="s16" x="1664" y="479">净流入额</text><text class="s16" x="1664" y="499">大宗流入</text>
</g>
<rect x="1662" y="177" width="233" height="1" fill="#c8a040"/>
<rect x="1662" y="270" width="233" height="1" fill="#c00000"/><rect x="1662" y="367" width="233" height="1" fill="#c00000"/><rect x="1662" y="429" width="233" height="1" fill="#c00000"/><rect x="1662" y="469" width="233" height="1" fill="#c00000"/><rect x="1662" y="510" width="233" height="1" fill="#c00000"/>
<g class="s14 n"><g fill="#ff3232"><text class="e s14" x="1777" y="188">4.00</text><text class="e s14" x="1777" y="206">3.99</text><text class="e s14" x="1777" y="224">3.98</text><text class="e s14" x="1777" y="242">3.97</text><text class="e s14" x="1777" y="260">3.96</text><text class="e s14" x="1777" y="281">4.00</text><text class="e s14" x="1777" y="300">4.00</text><text class="e s14" x="1777" y="357">620007</text><text class="e s14" x="1893" y="300">1.88</text></g>
<g fill="#c8c800"><text class="e s14" x="1893" y="188">100673</text><text class="e s14" x="1893" y="206">474</text><text class="e s14" x="1893" y="224">200</text><text class="e s14" x="1893" y="242">303</text><text class="e s14" x="1893" y="260">10</text></g>
<text class="e s14" x="1893" y="281" fill="#00e000">2.66</text><text class="e s14" x="1777" y="319" fill="#00e000">3.22</text><text class="e s14" x="1893" y="357" fill="#00e000">456043</text>
<text class="e s14" x="1777" y="338" fill="#c000c0">1269</text>
<g fill="#c0c0c0"><text class="e s14" x="1893" y="319">46.9亿</text><text class="e s14" x="1893" y="338">107.6万</text><text class="e s14" x="1777" y="378">9.27%</text><text class="e s14" x="1777" y="397">9.21</text><text class="e s14" x="1777" y="416">0.014</text><text class="e s14" x="1893" y="378">11.7亿</text><text class="e s14" x="1893" y="397">11.6亿</text><text class="e s14" x="1893" y="416">209.8</text></g>
<g fill="#ff3232"><text class="e s14" x="1853" y="479">5973万</text><text class="e s14" x="1893" y="479">15%</text><text class="e s14" x="1853" y="499">4615万</text><text class="e s14" x="1893" y="499">12%</text></g></g>
<rect x="1749.500" y="292.500" width="28" height="16" fill="none" stroke="#555"/>
<rect x="1732" y="476" width="54" height="6" fill="#ff3030"/><rect x="1732" y="495" width="41" height="6" fill="#ff3030"/>
<rect x="1881.500" y="453.500" width="11" height="12" rx="2" fill="none" stroke="#b03030"/><path d="M1884.500 459v4M1887.500 456v7M1890 460v3" stroke="#b03030"/>

<!-- ticks -->
<g class="b s13">
<g fill="#b8b8b8"><text class="s13 b" x="1663" y="520">14:55</text><text class="s13 b" x="1663" y="538">14:55</text><text class="s13 b" x="1663" y="556">14:55</text><text class="s13 b" x="1663" y="574">14:55</text><text class="s13 b" x="1663" y="592">14:56</text><text class="s13 b" x="1663" y="610">14:56</text><text class="s13 b" x="1663" y="628">14:56</text><text class="s13 b" x="1663" y="646">14:56</text><text class="s13 b" x="1663" y="664">14:56</text><text class="s13 b" x="1663" y="682">14:56</text><text class="s13 b" x="1663" y="700">14:56</text><text class="s13 b" x="1663" y="718">14:56</text><text class="s13 b" x="1663" y="736">14:56</text><text class="s13 b" x="1663" y="754">14:56</text><text class="s13 b" x="1663" y="772">14:56</text><text class="s13 b" x="1663" y="790">14:56</text><text class="s13 b" x="1663" y="808">14:56</text><text class="s13 b" x="1663" y="826">14:56</text><text class="s13 b" x="1663" y="844">14:56</text><text class="s13 b" x="1663" y="862">14:56</text><text class="s13 b" x="1663" y="880">14:57</text><text class="s13 b" x="1663" y="898">15:00</text><text class="s13 b" x="1663" y="916">15:05</text><text class="s13 b" x="1663" y="934">15:05</text><text class="s13 b" x="1663" y="952">15:09</text></g>
<g fill="#ff3232"><text class="e s13 b" x="1774" y="520">4.00</text><text class="e s13 b" x="1774" y="538">4.00</text><text class="e s13 b" x="1774" y="556">4.00</text><text class="e s13 b" x="1774" y="574">4.00</text><text class="e s13 b" x="1774" y="592">4.00</text><text class="e s13 b" x="1774" y="610">4.00</text><text class="e s13 b" x="1774" y="628">4.00</text><text class="e s13 b" x="1774" y="646">4.00</text><text class="e s13 b" x="1774" y="664">4.00</text><text class="e s13 b" x="1774" y="682">4.00</text><text class="e s13 b" x="1774" y="700">4.00</text><text class="e s13 b" x="1774" y="718">4.00</text><text class="e s13 b" x="1774" y="736">4.00</text><text class="e s13 b" x="1774" y="754">4.00</text><text class="e s13 b" x="1774" y="772">4.00</text><text class="e s13 b" x="1774" y="790">4.00</text><text class="e s13 b" x="1774" y="808">4.00</text><text class="e s13 b" x="1774" y="826">4.00</text><text class="e s13 b" x="1774" y="844">4.00</text><text class="e s13 b" x="1774" y="862">4.00</text><text class="e s13 b" x="1774" y="880">4.00</text><text class="e s13 b" x="1774" y="898">4.00</text><text class="e s13 b" x="1774" y="916">4.00</text><text class="e s13 b" x="1774" y="934">4.00</text><text class="e s13 b" x="1774" y="952">4.00</text></g>
<g fill="#c8c800"><text class="e s13 b" x="1840" y="520">301</text><text class="e s13 b" x="1840" y="538">92</text><text class="e s13 b" x="1840" y="556">11</text><text class="e s13 b" x="1840" y="574">1</text><text class="e s13 b" x="1840" y="592">120</text><text class="e s13 b" x="1840" y="610">37</text><text class="e s13 b" x="1840" y="628">22</text><text class="e s13 b" x="1840" y="646">10</text><text class="e s13 b" x="1840" y="664">3</text><text class="e s13 b" x="1840" y="682">9</text><text class="e s13 b" x="1840" y="700">2</text><text class="e s13 b" x="1840" y="718">11</text><text class="e s13 b" x="1840" y="736">4</text><text class="e s13 b" x="1840" y="754">2</text><text class="e s13 b" x="1840" y="772">25</text><text class="e s13 b" x="1840" y="790">102</text><text class="e s13 b" x="1840" y="808">212</text><text class="e s13 b" x="1840" y="826">226</text><text class="e s13 b" x="1840" y="844">28</text><text class="e s13 b" x="1840" y="862">25</text><text class="e s13 b" x="1840" y="880">4</text><text class="e s13 b" x="1840" y="898" fill="#c000c0">1269</text><text class="e s13 b" x="1840" y="916">25</text><text class="e s13 b" x="1840" y="934">50</text><text class="e s13 b" x="1840" y="952">10</text></g>
<g fill="#00e000"><text class="s13" x="1853" y="520">S</text><text class="s13" x="1853" y="538">S</text><text class="s13" x="1853" y="556">S</text><text class="s13" x="1853" y="574">S</text><text class="s13" x="1853" y="592">S</text><text class="s13" x="1853" y="610">S</text><text class="s13" x="1853" y="628">S</text><text class="s13" x="1853" y="646">S</text><text class="s13" x="1853" y="664">S</text><text class="s13" x="1853" y="682">S</text><text class="s13" x="1853" y="700">S</text><text class="s13" x="1853" y="718">S</text><text class="s13" x="1853" y="736">S</text><text class="s13" x="1853" y="754">S</text><text class="s13" x="1853" y="772">S</text><text class="s13" x="1853" y="790">S</text><text class="s13" x="1853" y="808">S</text><text class="s13" x="1853" y="826">S</text><text class="s13" x="1853" y="844">S</text><text class="s13" x="1853" y="862">S</text><text class="s13" x="1853" y="880">S</text></g>
<g fill="#b0b0b0"><text class="s13" x="1853" y="916">P</text><text class="s13" x="1853" y="934">P</text><text class="s13" x="1853" y="952">P</text></g>
<g fill="#808080"><text class="e s13 b" x="1893" y="520">2</text><text class="e s13 b" x="1893" y="538">30</text><text class="e s13 b" x="1893" y="556">10</text><text class="e s13 b" x="1893" y="574">1</text><text class="e s13 b" x="1893" y="592">4</text><text class="e s13 b" x="1893" y="610">22</text><text class="e s13 b" x="1893" y="628">3</text><text class="e s13 b" x="1893" y="646">10</text><text class="e s13 b" x="1893" y="664">2</text><text class="e s13 b" x="1893" y="682">1</text><text class="e s13 b" x="1893" y="700">2</text><text class="e s13 b" x="1893" y="718">2</text><text class="e s13 b" x="1893" y="736">2</text><text class="e s13 b" x="1893" y="754">1</text><text class="e s13 b" x="1893" y="772">1</text><text class="e s13 b" x="1893" y="790">3</text><text class="e s13 b" x="1893" y="808">13</text><text class="e s13 b" x="1893" y="826">19</text><text class="e s13 b" x="1893" y="844">23</text><text class="e s13 b" x="1893" y="862">3</text><text class="e s13 b" x="1893" y="880">4</text><text class="e s13 b" x="1893" y="898">45</text><text class="e s13 b" x="1893" y="916">3</text><text class="e s13 b" x="1893" y="934">3</text><text class="e s13 b" x="1893" y="952">1</text></g>
</g>

<!-- sidebar -->
<rect x="1895" y="31" width="25" height="1009" fill="#f4f4f4"/><rect x="1895" y="31" width="1" height="1009" fill="#999"/>
<g fill="none" stroke="#2a7de0" stroke-width="1.500" shape-rendering="auto">
<path d="M1900 42l7-6v3h7v6h-7v3z"/>
<path d="M1907 58l6 7h-3v7h-6v-7h-3z"/>
<path d="M1907 95l6-7h-3v-7h-6v7h-3z"/>
<rect x="1900.500" y="103.500" width="14" height="14"/><rect x="1900.500" y="127.500" width="14" height="14"/><rect x="1900.500" y="150.500" width="14" height="14"/><rect x="1900.500" y="173.500" width="14" height="14"/><rect x="1900.500" y="198.500" width="13" height="13"/><rect x="1900.500" y="221.500" width="14" height="13"/><rect x="1900.500" y="244.500" width="13" height="13"/><rect x="1900.500" y="267.500" width="13" height="13"/><rect x="1900.500" y="290.500" width="13" height="13"/><circle cx="1907" cy="319" r="7"/><rect x="1900.500" y="335.500" width="13" height="13"/><circle cx="1907" cy="342" r="3"/>
<rect x="1900.500" y="367.500" width="13" height="12"/><rect x="1900.500" y="490.500" width="13" height="13"/><rect x="1900.500" y="510.500" width="13" height="12"/>
</g>
<path d="M1902 106h5v1h-5zM1902 110h5v1h-5zM1902 113h5v1h-5z" fill="#008000"/><path d="M1908 106h5v1h-5zM1908 110h5v1h-5z" fill="#e00000"/>
<path d="M1902 130h3v2h-3zM1902 134h3v2h-3zM1902 137h3v2h-3z" fill="#008000"/><path d="M1906 130h3v2h-3zM1906 134h3v2h-3zM1906 137h3v2h-3z" fill="#2030d0"/><path d="M1910 130h3v2h-3zM1910 134h3v2h-3zM1910 137h3v2h-3z" fill="#d02020"/>
<path d="M1902 161l4-4 2 2 5-5" stroke="#e02020" fill="none" shape-rendering="auto"/>
<path d="M1904 177v8M1911 176v8" stroke="#e02020" stroke-width="2"/><path d="M1907.500 178v8" stroke="#008000" stroke-width="2"/>
<path d="M1903 201h8M1903 204h8M1903 207h8" stroke="#2a7de0"/>
<path d="M1903 373l3-3 2 2 3-3M1903 376l3-3 2 2 3-3" stroke="#e02020" fill="none" shape-rendering="auto"/>
<g fill="#0044aa" text-anchor="middle">
<text x="1907" y="228" class="m s11">Fi0</text><text x="1907" y="274" class="m s11" fill="#c03000">自</text><text x="1907" y="297" class="m s11">Fiz</text><text x="1907" y="319" class="m s11" fill="#007060">fx</text>
<text x="1907" y="395" class="m s11 b">RSI</text><text x="1907" y="418" class="m s14 b" fill="#c03030">$</text><text x="1907" y="497" class="m s11">Fs</text>
</g>
<path d="M1907 433l3 3h-2v4h4v-2l3 3-3 3v-2h-4v4h2l-3 3-3-3h2v-4h-4v2l-3-3 3-3v2h4v-4h-2z" fill="#0a50b0" shape-rendering="auto"/>
<path d="M1901 470l2-4 8-8 3 3-8 8z" fill="#e8a040" stroke="#805020" shape-rendering="auto"/>
<rect x="1897" y="356" width="22" height="1" fill="#999"/><rect x="1897" y="480" width="22" height="1" fill="#999"/>
<circle cx="1907" cy="516" r="4" fill="#30a030"/>
<rect x="1909" y="519" width="8" height="62" rx="4" fill="#3d4354" shape-rendering="auto"/>
<rect x="1909" y="564" width="8" height="17" rx="3" fill="#30f0e0" shape-rendering="auto"/>
<rect x="1897.500" y="646.500" width="21" height="21" fill="#fff" stroke="#aaa"/>
<g fill="#003a90">
<text class="m" x="1904" y="541">1</text><text class="m" x="1904" y="564">5</text><text class="m" x="1907" y="587">15</text><text class="m" x="1907" y="610">30</text><text class="m" x="1907" y="633">60</text><text class="m s13" x="1908" y="657">日</text><text class="m s13" x="1907" y="679">周</text><text class="m s13" x="1907" y="702">月</text><text class="m s11" x="1907" y="725">N</text><text class="m s13" x="1908" y="749">多</text><text class="m s13" x="1908" y="771">季</text><text class="m s13" x="1908" y="794">年</text>
</g>
</svg>
</body></html>
